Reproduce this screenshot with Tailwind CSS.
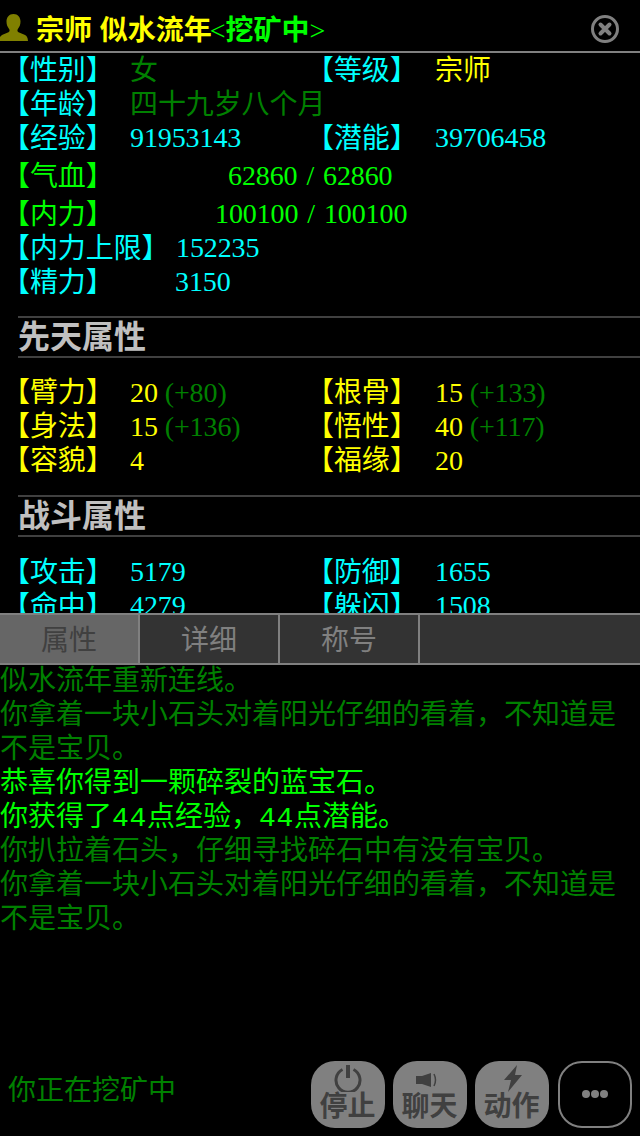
<!DOCTYPE html>
<html lang="zh">
<head>
    <meta charset="UTF-8">
    <meta name="viewport" content="width=device-width, initial-scale=1.0">
    <title>属性</title>
    <script src="https://cdn.jsdelivr.net/npm/@tailwindcss/browser@4"></script>
</head>
<body class="bg-black font-['Liberation_Serif','Noto_Sans_CJK_SC',serif] text-[28px] leading-[34px]">
<div class="flex flex-col w-[640px] h-[1136px] overflow-hidden">
    <!-- title bar -->
    <header class="flex items-center h-[53px] shrink-0 border-b-2 border-[#808080] pt-[10px]">
        <svg class="w-[29px] h-[29px] ml-[-1px] shrink-0 mb-[6px]" viewBox="0 0 29 29"><path fill="#808000" d="M14.500 1c4.400 0 7 3.400 7 7.600 0 3-1 5.600-2.600 7.300-.8 1-.6 2.800.6 3.400l6 2.500c2 .9 3.300 2.600 3.500 6.200H0c.2-3.600 1.500-5.300 3.500-6.200l6-2.500c1.200-.6 1.400-2.400.6-3.400C8.500 14.200 7.500 11.600 7.500 8.600 7.500 4.400 10.100 1 14.500 1z"/></svg>
        <span class="ml-[8px] font-bold text-[#ffff00] whitespace-pre font-['Liberation_Sans','Noto_Sans_CJK_SC',sans-serif]">宗师 似水流年</span><span class="ml-[-2px] text-[#00ff00]">&lt;<b>挖矿中</b>&gt;</span>
        <svg class="ml-auto mr-[21px] mb-[4px] w-[28px] h-[28px]" viewBox="0 0 28 28"><circle cx="14" cy="14" r="12.500" fill="none" stroke="#808080" stroke-width="3"/><path d="M9.500 9.500l9 9M18.500 9.500l-9 9" stroke="#808080" stroke-width="4" stroke-linecap="round"/></svg>
    </header>

    <!-- attributes -->
    <main class="h-[560px] shrink-0 overflow-hidden pl-[2px] pt-[1px] tracking-[-0.1px]">
        <div class="grid grid-cols-[128px_176px_129px_1fr] text-[#00ffff]">
            <span>【性别】</span><span class="text-[#008000]">女</span><span>【等级】</span><span class="text-[#ffff00]">宗师</span>
        </div>
        <div class="grid grid-cols-[128px_1fr] text-[#00ffff]">
            <span>【年龄】</span><span class="text-[#008000]">四十九岁八个月</span>
        </div>
        <div class="grid grid-cols-[128px_176px_129px_1fr] text-[#00ffff]">
            <span>【经验】</span><span class="mt-[-1px]">91953143</span><span>【潜能】</span><span class="mt-[-1px]">39706458</span>
        </div>
        <div class="flex text-[#00ff00] mt-[4px]">
            <span class="w-[226px]">【气血】</span><span class="mt-[-1px] [word-spacing:2px]">62860 / 62860</span>
        </div>
        <div class="flex text-[#00ff00] mt-[4px]">
            <span class="w-[213px]">【内力】</span><span class="mt-[-1px] [word-spacing:2px]">100100 / 100100</span>
        </div>
        <div class="flex text-[#00ffff]">
            <span class="w-[174px]">【内力上限】</span><span class="mt-[-1px]">152235</span>
        </div>
        <div class="flex text-[#00ffff]">
            <span class="w-[173px]">【精力】</span><span class="mt-[-1px]">3150</span>
        </div>

        <h2 class="ml-[16px] mt-[16px] h-[42px] border-y-2 border-[#404040] font-bold text-[#c0c0c0] text-[32px] leading-[38px] tracking-normal">先天属性</h2>
        <div class="mt-[18px] grid grid-cols-[128px_176px_129px_1fr] text-[#ffff00]">
            <span>【臂力】</span><span>20 <span class="text-[#008000]">(+80)</span></span><span>【根骨】</span><span>15 <span class="text-[#008000]">(+133)</span></span>
            <span>【身法】</span><span>15 <span class="text-[#008000]">(+136)</span></span><span>【悟性】</span><span>40 <span class="text-[#008000]">(+117)</span></span>
            <span>【容貌】</span><span>4</span><span>【福缘】</span><span>20</span>
        </div>

        <h2 class="ml-[16px] mt-[17px] h-[42px] border-y-2 border-[#404040] font-bold text-[#c0c0c0] text-[32px] leading-[38px] tracking-normal">战斗属性</h2>
        <div class="mt-[19px] grid grid-cols-[128px_176px_129px_1fr] text-[#00ffff]">
            <span>【攻击】</span><span class="mt-[-1px]">5179</span><span>【防御】</span><span class="mt-[-1px]">1655</span>
            <span>【命中】</span><span class="mt-[-1px]">4279</span><span>【躲闪】</span><span class="mt-[-1px]">1508</span>
        </div>
    </main>

    <!-- tabs -->
    <nav class="flex h-[52px] shrink-0 bg-[#333333] border-y-2 border-[#808080] text-[#808080] text-center leading-[51px] font-['Liberation_Sans','Noto_Sans_CJK_SC',sans-serif]">
        <span class="w-[140px] bg-[#666666] text-[#404040] border-r-2 border-[#808080]">属性</span>
        <span class="w-[140px] border-r-2 border-[#808080]">详细</span>
        <span class="w-[140px] border-r-2 border-[#808080]">称号</span>
    </nav>

    <!-- log -->
    <section class="flex-1 mt-[-1px] text-[#008000] font-['Liberation_Sans','Noto_Sans_CJK_SC',sans-serif]">
        <p>似水流年重新连线。</p>
        <p>你拿着一块小石头对着阳光仔细的看着，不知道是<br>不是宝贝。</p>
        <p class="text-[#00ff00]">恭喜你得到一颗碎裂的蓝宝石。</p>
        <p class="text-[#00ff00]">你获得了<span class="font-['Liberation_Mono'] tracking-[0.7px] leading-[0]">44</span>点经验，<span class="font-['Liberation_Mono'] tracking-[0.7px] leading-[0]">44</span>点潜能。</p>
        <p>你扒拉着石头，仔细寻找碎石中有没有宝贝。</p>
        <p>你拿着一块小石头对着阳光仔细的看着，不知道是<br>不是宝贝。</p>
    </section>

    <!-- bottom actions -->
    <footer class="flex items-center h-[80px] shrink-0 pb-[4px] font-['Liberation_Sans','Noto_Sans_CJK_SC',sans-serif]">
        <span class="ml-[8px] mt-[-6px] text-[#008000] mr-auto">你正在挖矿中</span>
        <div class="flex gap-[8px] mr-[8px]">
            <button class="flex flex-col items-center w-[74px] h-[67px] rounded-[24px] bg-[#808080] text-[#404040] font-bold leading-[30px] pt-[3px] pr-[1px]">
                <svg class="w-[28px] h-[28px]" viewBox="0 0 28 28"><path d="M8.500 5.500a12 12 0 1 0 11 0" fill="none" stroke="#404040" stroke-width="3"/><path d="M14 1v13" stroke="#404040" stroke-width="4"/></svg>
                <span>停止</span>
            </button>
            <button class="flex flex-col items-center w-[74px] h-[67px] rounded-[24px] bg-[#808080] text-[#404040] font-bold leading-[30px] pt-[3px] pr-[1px]">
                <svg class="w-[28px] h-[28px]" viewBox="0 0 28 28"><path d="M0 12h6l9-3v14l-9-3H0z" fill="#404040"/><path d="M18 10c2 4 2 8 0 12" fill="none" stroke="#404040" stroke-width="1.500"/></svg>
                <span>聊天</span>
            </button>
            <button class="flex flex-col items-center w-[74px] h-[67px] rounded-[24px] bg-[#808080] text-[#404040] font-bold leading-[30px] pt-[3px] pr-[1px]">
                <svg class="w-[28px] h-[28px]" viewBox="0 0 28 28"><path d="M19 1L6 16h7l-3 12 14-17h-7z" fill="#404040"/></svg>
                <span>动作</span>
            </button>
            <button class="ml-[1px] flex items-center justify-center gap-[1px] w-[74px] h-[67px] rounded-[24px] border-2 border-[#808080]">
                <i class="w-[8px] h-[8px] rounded-full bg-[#808080]"></i><i class="w-[8px] h-[8px] rounded-full bg-[#808080]"></i><i class="w-[8px] h-[8px] rounded-full bg-[#808080]"></i>
            </button>
        </div>
    </footer>
</div>
</body>
</html>
